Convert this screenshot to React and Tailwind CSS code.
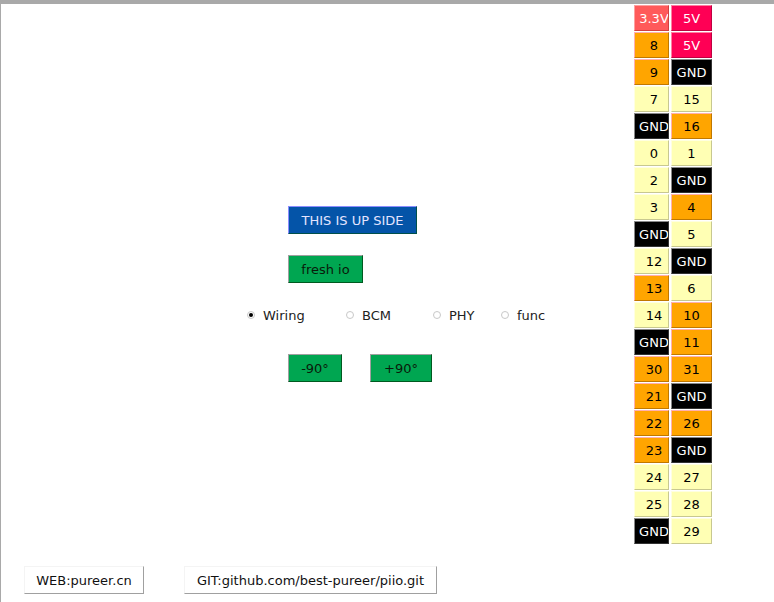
import React from 'react'

const FONT = { fontFamily: '"DejaVu Sans", "Liberation Sans", sans-serif' }

const ROWS = [
  ['3.3V', '5V'], ['8', '5V'], ['9', 'GND'], ['7', '15'], ['GND', '16'],
  ['0', '1'], ['2', 'GND'], ['3', '4'], ['GND', '5'], ['12', 'GND'],
  ['13', '6'], ['14', '10'], ['GND', '11'], ['30', '31'], ['21', 'GND'],
  ['22', '26'], ['23', 'GND'], ['24', '27'], ['25', '28'], ['GND', '29'],
]

const ORANGE = ['8', '9', '16', '4', '13', '10', '11', '30', '31', '21', '22', '26', '23']

function pinClass(label) {
  if (label === '3.3V') return 'bg-[#ff5a5a] text-white border-t-[#ffa0a0] border-l-[#ffa0a0] border-b-[#d04040] border-r-[#d04040]'
  if (label === '5V') return 'bg-[#ff0055] text-white border-t-[#ff80a0] border-l-[#ff80a0] border-b-[#c00040] border-r-[#c00040]'
  if (label === 'GND') return 'bg-black text-white border-t-[#888] border-l-[#888] border-b-[#333] border-r-[#333]'
  if (ORANGE.includes(label)) return 'bg-[#ffa500] text-black border-t-[#ffb0b0] border-l-[#ffb0b0] border-b-[#c07800] border-r-[#c07800]'
  return 'bg-[#ffffb4] text-black border-t-[#ffffe0] border-l-[#ffffe0] border-b-[#c8c890] border-r-[#c8c890]'
}

function Pin({ label, narrow }) {
  return (
    <div className={`h-[26px] border overflow-hidden ${narrow ? 'w-[35px]' : 'w-[41px]'} ${pinClass(label)}`}>
      <div className={`${narrow ? 'w-[38px]' : 'w-[39px]'} h-full flex items-center justify-center text-[13px] leading-none whitespace-nowrap`}>
        {label}
      </div>
    </div>
  )
}

function Radio({ label, checked, width }) {
  return (
    <div className={`flex items-center gap-[8px] ${width}`}>
      <span className="w-[8px] h-[8px] rounded-full border border-[#c8c8c8] bg-white flex items-center justify-center">
        {checked && <span className="w-[4px] h-[4px] rounded-full bg-black" />}
      </span>
      <span className="text-[13px] text-[#222] leading-none">{label}</span>
    </div>
  )
}

const greenBtn = 'h-[28px] bg-[#00a651] text-[#0a1a0a] text-[13px] border border-t-[#a0a0a0] border-l-[#a0a0a0] border-b-[#005a20] border-r-[#005a20] flex items-center justify-center leading-none'
const linkBtn = 'h-[28px] text-[13px] text-[#111] border border-t-[#f4f4f4] border-l-[#f4f4f4] border-b-[#a0a0a0] border-r-[#a0a0a0] flex items-center justify-center leading-none'

export default function App() {
  return (
    <div className="w-[774px] h-[602px] bg-white overflow-hidden flex flex-col" style={FONT}>
      <div className="h-[4px] bg-[#a9a9a9]" />
      <div className="flex-1 flex border-l border-[#a9a9a9]">
        {/* controls */}
        <div className="w-[633px] flex flex-col">
          <div className="pl-[287px] pt-[202px]">
            <div className="w-[129px] h-[28px] bg-[#0454a8] text-[#e4e4ff] text-[13px] border border-t-[#8c8cff] border-l-[#8c8cff] border-b-[#00504a] border-r-[#00504a] flex items-center justify-center leading-none">
              THIS IS UP SIDE
            </div>
            <div className={`${greenBtn} w-[75px] mt-[21px]`}>fresh io</div>
          </div>
          <div className="flex pl-[246px] mt-[24px] h-[16px]">
            <Radio label="Wiring" checked width="w-[99px]" />
            <Radio label="BCM" width="w-[87px]" />
            <Radio label="PHY" width="w-[68px]" />
            <Radio label="func" />
          </div>
          <div className="flex pl-[287px] mt-[31px] gap-[28px]">
            <div className={`${greenBtn} w-[54px]`}>-90°</div>
            <div className={`${greenBtn} w-[62px]`}>+90°</div>
          </div>
          <div className="flex pl-[23px] mt-auto mb-[8px] gap-[40px]">
            <div className={`${linkBtn} w-[120px]`}>WEB:pureer.cn</div>
            <div className={`${linkBtn} w-[253px]`}>GIT:github.com/best-pureer/piio.git</div>
          </div>
        </div>
        {/* pin header */}
        <div className="pt-[1px] flex flex-col gap-[1px]">
          {ROWS.map(([a, b], i) => (
            <div key={i} className="flex gap-[2px]">
              <Pin label={a} narrow />
              <Pin label={b} />
            </div>
          ))}
        </div>
      </div>
    </div>
  )
}
